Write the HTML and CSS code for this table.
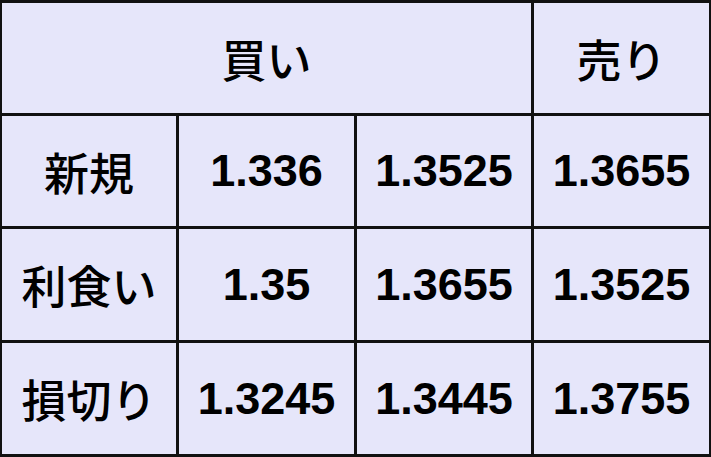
FILE: index.html
```html
<!DOCTYPE html>
<html lang="ja">
<head>
<meta charset="utf-8">
<title>売買</title>
<link rel="stylesheet" href="styles.css">
</head>
<body>
<div class="grid">
  <div class="cell head span3">買い</div>
  <div class="cell head">売り</div>
  <div class="cell label">新規</div>
  <div class="cell num">1.336</div>
  <div class="cell num">1.3525</div>
  <div class="cell num">1.3655</div>
  <div class="cell label">利食い</div>
  <div class="cell num">1.35</div>
  <div class="cell num">1.3655</div>
  <div class="cell num">1.3525</div>
  <div class="cell label">損切り</div>
  <div class="cell num">1.3245</div>
  <div class="cell num">1.3445</div>
  <div class="cell num">1.3755</div>
</div>
</body>
</html>
```
FILE: styles.css
```css
html, body {
  margin: 0;
  padding: 0;
  background: #e6e6fa;
}
.grid {
  width: 711px;
  height: 457px;
  box-sizing: border-box;
  background: #111;
  padding: 3px 2px;
  display: grid;
  grid-template-columns: 174px 175px 174px 175px;
  grid-template-rows: 110px 110px 111px 111px;
  column-gap: 3px;
  row-gap: 3px;
}
.cell {
  background: #e6e6fa;
  display: flex;
  align-items: center;
  justify-content: center;
  color: #000;
  font-size: 45px;
  font-weight: 700;
}
.span3 {
  grid-column: span 3;
}
.head, .label {
  font-family: "Noto Sans CJK JP", sans-serif;
  font-weight: 500;
}
.num {
  font-family: "Liberation Sans", Arial, sans-serif;
}
```
